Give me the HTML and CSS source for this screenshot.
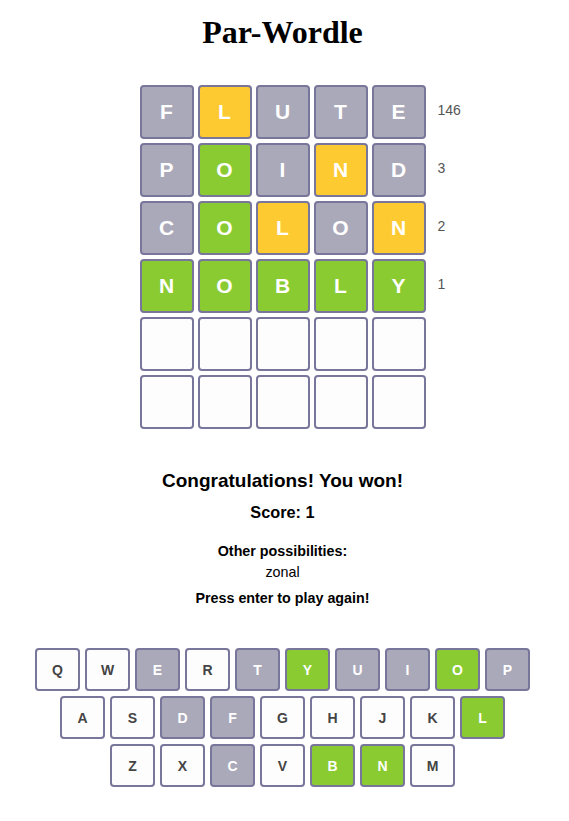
FILE: index.html
```html
<!DOCTYPE html>
<html>
<head>
<meta charset="utf-8">
<title>Par-Wordle</title>
<link rel="stylesheet" href="styles.css">
</head>
<body>
<div class="page">
  <h1 class="title">Par-Wordle</h1>

  <div class="board">
    <div class="row">
      <div class="spacer"></div>
      <div class="tile absent">F</div><div class="tile present">L</div><div class="tile absent">U</div><div class="tile absent">T</div><div class="tile absent">E</div>
      <div class="count">146</div>
    </div>
    <div class="row">
      <div class="spacer"></div>
      <div class="tile absent">P</div><div class="tile correct">O</div><div class="tile absent">I</div><div class="tile present">N</div><div class="tile absent">D</div>
      <div class="count">3</div>
    </div>
    <div class="row">
      <div class="spacer"></div>
      <div class="tile absent">C</div><div class="tile correct">O</div><div class="tile present">L</div><div class="tile absent">O</div><div class="tile present">N</div>
      <div class="count">2</div>
    </div>
    <div class="row">
      <div class="spacer"></div>
      <div class="tile correct">N</div><div class="tile correct">O</div><div class="tile correct">B</div><div class="tile correct">L</div><div class="tile correct">Y</div>
      <div class="count">1</div>
    </div>
    <div class="row">
      <div class="spacer"></div>
      <div class="tile"></div><div class="tile"></div><div class="tile"></div><div class="tile"></div><div class="tile"></div>
      <div class="count"></div>
    </div>
    <div class="row">
      <div class="spacer"></div>
      <div class="tile"></div><div class="tile"></div><div class="tile"></div><div class="tile"></div><div class="tile"></div>
      <div class="count"></div>
    </div>
  </div>

  <div class="result">
    <h3 class="won">Congratulations! You won!</h3>
    <h4 class="score">Score: 1</h4>
    <div class="other-label">Other possibilities:</div>
    <div class="other-list">zonal</div>
    <div class="again">Press enter to play again!</div>
  </div>

  <div class="keyboard">
    <div class="krow">
      <div class="key">Q</div><div class="key">W</div><div class="key absent">E</div><div class="key">R</div><div class="key absent">T</div><div class="key correct">Y</div><div class="key absent">U</div><div class="key absent">I</div><div class="key correct">O</div><div class="key absent">P</div>
    </div>
    <div class="krow">
      <div class="key">A</div><div class="key">S</div><div class="key absent">D</div><div class="key absent">F</div><div class="key">G</div><div class="key">H</div><div class="key">J</div><div class="key">K</div><div class="key correct">L</div>
    </div>
    <div class="krow">
      <div class="key">Z</div><div class="key">X</div><div class="key absent">C</div><div class="key">V</div><div class="key correct">B</div><div class="key correct">N</div><div class="key">M</div>
    </div>
  </div>
</div>
</body>
</html>
```

FILE: styles.css
```css
html, body {
  margin: 0;
  padding: 0;
  background: #ffffff;
}

.page {
  padding: 14px 12px 0 8px;
  font-family: "Liberation Sans", Arial, sans-serif;
  color: #000;
}

.title {
  margin: 0;
  font-family: "Liberation Serif", "Times New Roman", serif;
  font-size: 32px;
  line-height: 37px;
  font-weight: bold;
  text-align: center;
}

.board {
  margin-top: 34px;
  display: flex;
  flex-direction: column;
  align-items: center;
  gap: 4px;
}

.row {
  display: flex;
  align-items: flex-start;
  gap: 4px;
}

.spacer {
  width: 48px;
}

.count {
  box-sizing: border-box;
  width: 40px;
  margin-left: 8px;
  padding-top: 17px;
  font-size: 14px;
  line-height: 16px;
  color: #555;
}

.tile {
  box-sizing: border-box;
  width: 54px;
  height: 54px;
  border: 2px solid #78769a;
  border-radius: 4px;
  background: #fdfdfd;
  display: flex;
  align-items: center;
  justify-content: center;
  font-size: 21px;
  font-weight: bold;
  color: #fff;
}

.tile.absent,
.key.absent {
  background: #aaa9b9;
  color: #fff;
}

.tile.present {
  background: #fdca32;
  color: #fff;
}

.tile.correct,
.key.correct {
  background: #89cb31;
  color: #fff;
}

.result {
  text-align: center;
  margin-top: 41px;
}

.won {
  margin: 0;
  font-size: 19px;
  line-height: 21px;
  font-weight: bold;
}

.score {
  margin: 12px 0 0;
  font-size: 16.3px;
  line-height: 18px;
  font-weight: bold;
}

.other-label {
  margin-top: 22px;
  font-size: 14.3px;
  line-height: 16px;
  font-weight: bold;
}

.other-list {
  margin-top: 5px;
  font-size: 14.3px;
  line-height: 16px;
}

.again {
  margin-top: 10px;
  font-size: 14.3px;
  line-height: 16px;
  font-weight: bold;
}

.keyboard {
  margin-top: 42px;
  display: flex;
  flex-direction: column;
  align-items: center;
  gap: 5px;
}

.krow {
  display: flex;
  gap: 5px;
}

.key {
  box-sizing: border-box;
  width: 45px;
  height: 43px;
  border: 2px solid #78769a;
  border-radius: 4px;
  background: #fdfdfd;
  display: flex;
  align-items: center;
  justify-content: center;
  font-size: 14px;
  font-weight: bold;
  color: #444;
}
```
